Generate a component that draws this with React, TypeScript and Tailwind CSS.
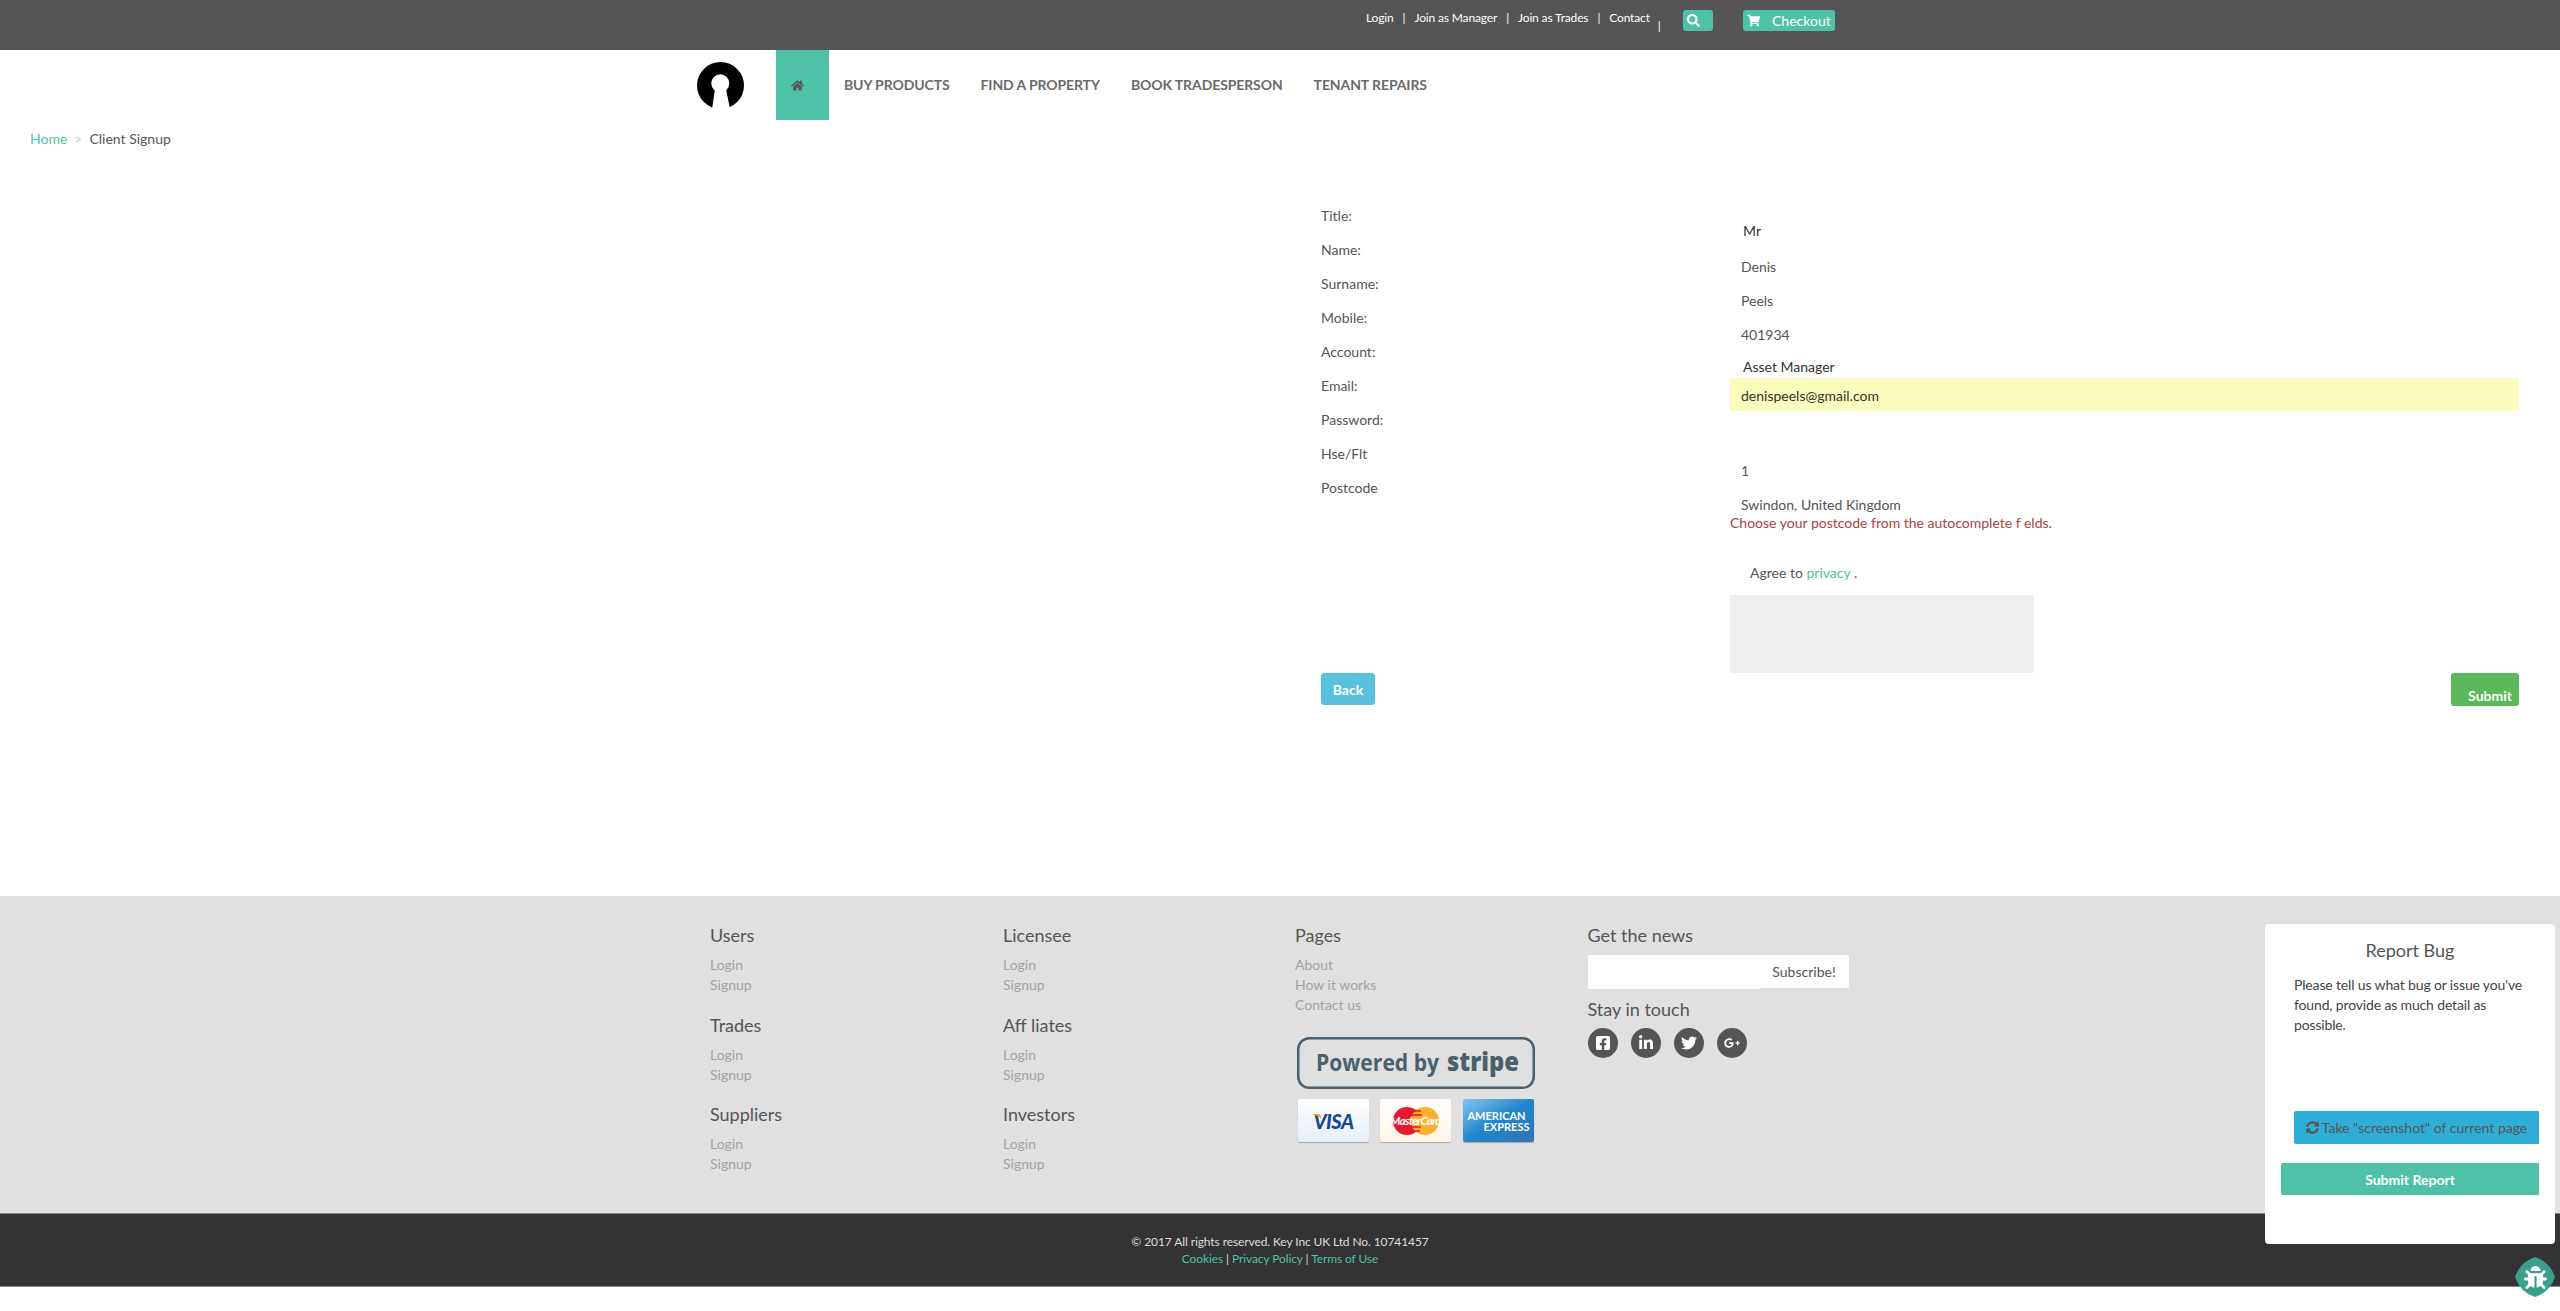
import React from "react";
import { FaHome, FaSearch, FaShoppingCart, FaSyncAlt, FaBug, FaFacebookSquare, FaLinkedinIn, FaTwitter, FaGooglePlusG } from "react-icons/fa";

const font = { fontFamily: "Lato, sans-serif" };

function Col({ title, links }: { title: string; links: string[] }) {
  return (
    <div className="h-[89.5px]">
      <div className="text-[18px] leading-[24px] font-normal text-[#555]">{title}</div>
      <div className="mt-[8px] text-[14px] leading-[20px] text-[#a3a3a3]">
        {links.map((l) => (
          <div key={l}>{l}</div>
        ))}
      </div>
    </div>
  );
}

function Label({ children }: { children: React.ReactNode }) {
  return <div className="h-[34px] text-[14px] leading-[20px] text-[#555]">{children}</div>;
}

export default function App() {
  return (
    <div className="relative h-[1311px] overflow-hidden bg-white" style={font}>
      <header className="flex h-[50px] bg-[#555] text-white text-[12px]">
        <div className="ml-[1366px] mt-[8px] flex h-[20px] w-[317px] items-start leading-[20px] tracking-[-0.15px]">
          <span>Login</span>
          <span className="mx-[9px]">|</span>
          <span>Join as Manager</span>
          <span className="mx-[9px]">|</span>
          <span>Join as Trades</span>
          <span className="mx-[9px]">|</span>
          <span>Contact</span>
          <span className="ml-[8px] mt-[8px]">|</span>
        </div>
        <div className="mt-[10px] flex h-[21px] w-[30px] items-center rounded-[3px] bg-[#4fc1a7] pl-[4px]">
          <FaSearch className="size-[13px]" />
        </div>
        <div className="ml-[30px] mt-[10px] flex h-[21px] w-[92px] items-center rounded-[3px] bg-[#4fc1a7] pl-[4px] text-[14px]">
          <FaShoppingCart className="size-[13px]" />
          <span className="ml-[12px]">Checkout</span>
        </div>
      </header>

      <nav className="flex h-[70px] items-start pl-[697px]">
        <svg viewBox="0 0 47 47" className="mt-[12px] size-[47px]">
          <circle cx="23.500" cy="23.500" r="23.500" fill="#000" />
          <circle cx="23.300" cy="21.300" r="9" fill="#fff" />
          <polygon points="18,27 29,27 33,47 15,47" fill="#fff" />
        </svg>
        <div className="ml-[32px] flex h-[70px] w-[53px] items-center bg-[#4fc1a7] pl-[15px] text-[#555]">
          <FaHome className="size-[13px]" />
        </div>
        <div className="ml-[15px] flex h-[69px] items-center gap-[31px] text-[14px] font-bold text-[#6b6b6b] tracking-[-0.1px]">
          <span>BUY PRODUCTS</span>
          <span>FIND A PROPERTY</span>
          <span>BOOK TRADESPERSON</span>
          <span>TENANT REPAIRS</span>
        </div>
      </nav>

      <div className="mt-[9px] flex h-[19px] items-center pl-[30px] text-[14px] text-[#555]">
        <span className="text-[#4fc1a7]">Home</span>
        <span className="mx-[7px] text-[#ccc]">&gt;</span>
        <span>Client Signup</span>
      </div>

      <main className="flex h-[748px] pl-[1321px] pr-[41px]">
        <div className="flex w-[409px] flex-col items-start pt-[58px]">
          <Label>Title:</Label>
          <Label>Name:</Label>
          <Label>Surname:</Label>
          <Label>Mobile:</Label>
          <Label>Account:</Label>
          <Label>Email:</Label>
          <Label>Password:</Label>
          <Label>Hse/Flt</Label>
          <Label>Postcode</Label>
          <div className="mt-[161px] flex h-[32px] w-[54px] items-center justify-center rounded-[3px] bg-[#5bc0de] text-[14px] font-bold text-white">Back</div>
        </div>
        <div className="flex flex-1 flex-col text-[14px] leading-[20px] text-[#555]">
          <div className="h-[109px] pl-[13px] pt-[73px] text-[#333]">Mr</div>
          <div className="h-[34px] pl-[11px]">Denis</div>
          <div className="h-[34px] pl-[11px]">Peels</div>
          <div className="h-[32px] pl-[11px]">401934</div>
          <div className="h-[21px] pl-[13px] text-[#333]">Asset Manager</div>
          <div className="h-[33px] bg-[#fafdbb] pl-[11px] pt-[8px] text-[#333]">denispeels@gmail.com</div>
          <div className="h-[50px]" />
          <div className="h-[34px] pl-[11px]">1</div>
          <div className="h-[18px] pl-[11px]">Swindon, United Kingdom</div>
          <div className="h-[20px] text-[#a94442]">Choose your postcode from the autocomplete f elds.</div>
          <div className="mt-[30px] pl-[20px]">
            Agree to <span className="text-[#4fc1a7]">privacy</span> .
          </div>
          <div className="mt-[12px] h-[78px] w-[304px] bg-[#eee]" />
          <div className="flex h-[33px] w-[68px] items-end justify-end self-end rounded-[3px] bg-[#5cb85c] pr-[7px] font-bold text-white">Submit</div>
        </div>
      </main>

      <footer className="flex h-[317px] bg-[#e0e0e0] pl-[710px] pt-[27px]">
        <div className="flex w-[293px] flex-col">
          <Col title="Users" links={["Login", "Signup"]} />
          <Col title="Trades" links={["Login", "Signup"]} />
          <Col title="Suppliers" links={["Login", "Signup"]} />
        </div>
        <div className="flex w-[292px] flex-col">
          <Col title="Licensee" links={["Login", "Signup"]} />
          <Col title="Aff liates" links={["Login", "Signup"]} />
          <Col title="Investors" links={["Login", "Signup"]} />
        </div>
        <div className="w-[292.500px]">
          <div className="h-[114px]">
            <div className="text-[18px] leading-[24px] font-normal text-[#555]">Pages</div>
            <div className="mt-[8px] text-[14px] leading-[20px] text-[#a3a3a3]">
              <div>About</div>
              <div>How it works</div>
              <div>Contact us</div>
            </div>
          </div>
          <svg viewBox="0 0 238 52" className="ml-[2px] h-[52px] w-[238px]">
            <rect x="1.250" y="1.250" width="235.500" height="49.500" rx="11" fill="none" stroke="#4a606d" strokeWidth="2.500" />
            <text x="19" y="34" fontFamily="Open Sans, sans-serif" fontSize="24" fontWeight="700" fill="#4a606d" textLength="123" lengthAdjust="spacingAndGlyphs">Powered by</text>
            <text x="150" y="34" fontFamily="Open Sans, sans-serif" fontSize="27" fontWeight="800" fill="#4a606d" textLength="72" lengthAdjust="spacingAndGlyphs">stripe</text>
          </svg>
          <div className="ml-[3px] mt-[10px] flex gap-[11px]">
            <div className="relative flex h-[43px] w-[71px] items-center justify-center rounded-[2px] bg-gradient-to-b from-white to-[#e6eef7] text-[20px] font-black italic tracking-[-0.5px] text-[#154a90] shadow-[0_1px_1px_#aaa]">
              <svg viewBox="0 0 12 6" className="absolute left-[13px] top-[15px] h-[5px] w-[11px]">
                <path d="M0 0H9Q11 0 12 6Q8 1.500 0 0Z" fill="#f5a623" />
              </svg>
              VISA
            </div>
            <div className="relative flex h-[43px] w-[71px] items-center justify-center rounded-[2px] bg-gradient-to-b from-white to-[#fff5e6] shadow-[0_1px_1px_#aaa]">
              <svg viewBox="0 0 46 28" className="h-[28px] w-[46px]">
                <circle cx="14" cy="14" r="14" fill="#e8192c" />
                <circle cx="32" cy="14" r="14" fill="#fbb034" />
                <path d="M18 4h10M17 8h12M18 20h10M19 24h8" stroke="#e8192c" strokeWidth="1.500" />
              </svg>
              <span className="absolute text-[11.5px] font-bold italic tracking-[-0.7px] text-white">MasterCard</span>
            </div>
            <div className="ml-[1px] flex h-[43px] w-[71px] flex-col items-center justify-center rounded-[2px] bg-gradient-to-br from-[#7fc7ee] via-[#1f85c9] to-[#3272b8] text-[11px] font-bold leading-[11px] text-white shadow-[0_1px_1px_#aaa]">
              <span className="-ml-[4px]">AMERICAN</span>
              <span className="ml-[16px]">EXPRESS</span>
            </div>
          </div>
        </div>
        <div>
          <div className="text-[18px] leading-[24px] font-normal text-[#555]">Get the news</div>
          <div className="mt-[8px] flex items-start">
            <div className="h-[34px] w-[172px] rounded-l-[2px] bg-white" />
            <div className="flex h-[33px] w-[89px] items-center justify-center rounded-r-[2px] bg-white text-[14px] text-[#555]">Subscribe!</div>
          </div>
          <div className="mt-[8px] text-[18px] leading-[24px] font-normal text-[#555]">Stay in touch</div>
          <div className="mt-[7px] flex gap-[13px]">
            {[FaFacebookSquare, FaLinkedinIn, FaTwitter, FaGooglePlusG].map((I, i) => (
              <div key={i} className="flex size-[30px] items-center justify-center rounded-full bg-[#555] text-white">
                <I className="size-[16px]" />
              </div>
            ))}
          </div>
        </div>
      </footer>

      <div className="flex h-[74px] flex-col items-center border-y border-[#888] bg-[#333] pt-[19px] text-[12px] leading-[17px] tracking-[-0.1px] text-[#ddd]">
        <div>© 2017 All rights reserved. Key Inc UK Ltd No. 10741457</div>
        <div>
          <span className="text-[#4fc1a7]">Cookies</span> | <span className="text-[#4fc1a7]">Privacy Policy</span> | <span className="text-[#4fc1a7]">Terms of Use</span>
        </div>
      </div>

      <aside className="absolute left-[2265px] top-[924px] h-[320px] w-[290px] rounded-[4px] bg-white">
        <div className="mt-[14px] text-center text-[18px] leading-[24px] font-normal text-[#555]">Report Bug</div>
        <p className="ml-[29px] mt-[13px] w-[240px] text-[14px] leading-[20px] tracking-[-0.15px] text-[#444]">Please tell us what bug or issue you've found, provide as much detail as possible.</p>
        <div className="ml-[29px] mt-[76px] flex h-[33px] w-[245px] items-center justify-center rounded-l-[2px] bg-[#2eaed6] text-[14px] text-[#555]">
          <FaSyncAlt className="mr-[3px] size-[13px]" />
          Take "screenshot" of current page
        </div>
        <div className="ml-[16px] mt-[19px] flex h-[32px] w-[258px] items-center justify-center rounded-l-[2px] bg-[#4fc1a7] text-[14px] font-bold text-white">Submit Report</div>
      </aside>

      <div className="absolute left-[2515px] top-[1257px] flex size-[40px] items-center justify-center text-white">
        <svg viewBox="0 0 40 40" className="absolute inset-0 size-[40px]">
          <path d="M20 0Q35 5 40 20Q35 35 20 40Q5 35 0 20Q5 5 20 0Z" fill="#3a9f8c" />
        </svg>
        <FaBug className="relative size-[23px]" />
      </div>
    </div>
  );
}
